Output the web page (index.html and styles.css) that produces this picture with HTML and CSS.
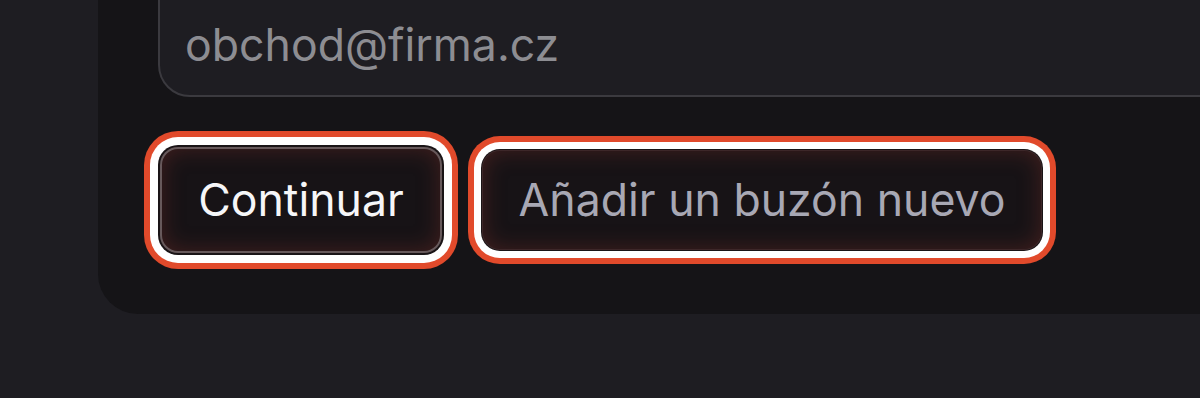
FILE: index.html
```html
<!DOCTYPE html>
<html lang="es">
<head>
<meta charset="utf-8">
<link rel="stylesheet" href="styles.css">
</head>
<body>
<div class="page">
  <div class="card">
    <div class="field"><span class="placeholder">obchod@firma.cz</span></div>
    <div class="actions">
      <button class="btn btn-primary">Continuar</button>
      <button class="btn btn-secondary">Añadir un buzón nuevo</button>
    </div>
  </div>
</div>
</body>
</html>
```
FILE: styles.css
```css
* { box-sizing: border-box; }
html, body {
  margin: 0;
  padding: 0;
  background: #1e1d22;
  overflow: hidden;
}
.page {
  width: 1200px;
  height: 398px;
  overflow: hidden;
  font-family: Inter, "Noto Sans", sans-serif;
}
.card {
  margin-top: -60px;
  margin-left: 98px;
  width: 1300px;
  height: 374px;
  background: #151417;
  border-radius: 0 0 0 40px;
  padding: 0 0 0 60px;
  display: flex;
  flex-direction: column;
}
.field {
  height: 157px;
  border: 2px solid #3b3a3f;
  border-radius: 32px;
  background: #1e1d22;
  display: flex;
  align-items: flex-end;
  padding: 0 0 24px 25px;
}
.placeholder {
  font-size: 44.6px;
  line-height: 52px;
  color: #8d8d92;
}
.actions {
  margin-top: 50px;
  display: flex;
  align-items: center;
  gap: 40px;
  padding-left: 2px;
}
.btn {
  font-family: inherit;
  font-size: 44.6px;
  line-height: 52px;
  padding: 0;
  text-align: center;
  white-space: nowrap;
  border-radius: 18px;
  background: #171316;
  cursor: pointer;
}
.btn-primary {
  width: 282px;
  height: 106px;
  color: #f6f6f8;
  border: 2px solid rgba(225, 195, 195, 0.4);
  box-shadow:
    inset 0 0 22px rgba(150, 55, 45, 0.35),
    0 0 0 2px #1a1416,
    0 0 0 10px #ffffff,
    0 0 0 16px #e14a2b;
}
.btn-secondary {
  width: 560px;
  height: 100px;
  color: #a8a8b4;
  border: 1px solid rgba(120, 70, 70, 0.4);
  box-shadow:
    inset 0 0 22px rgba(150, 55, 45, 0.35),
    0 0 0 1px #1a1416,
    0 0 0 8px #ffffff,
    0 0 0 14px #e14a2b;
}
```
